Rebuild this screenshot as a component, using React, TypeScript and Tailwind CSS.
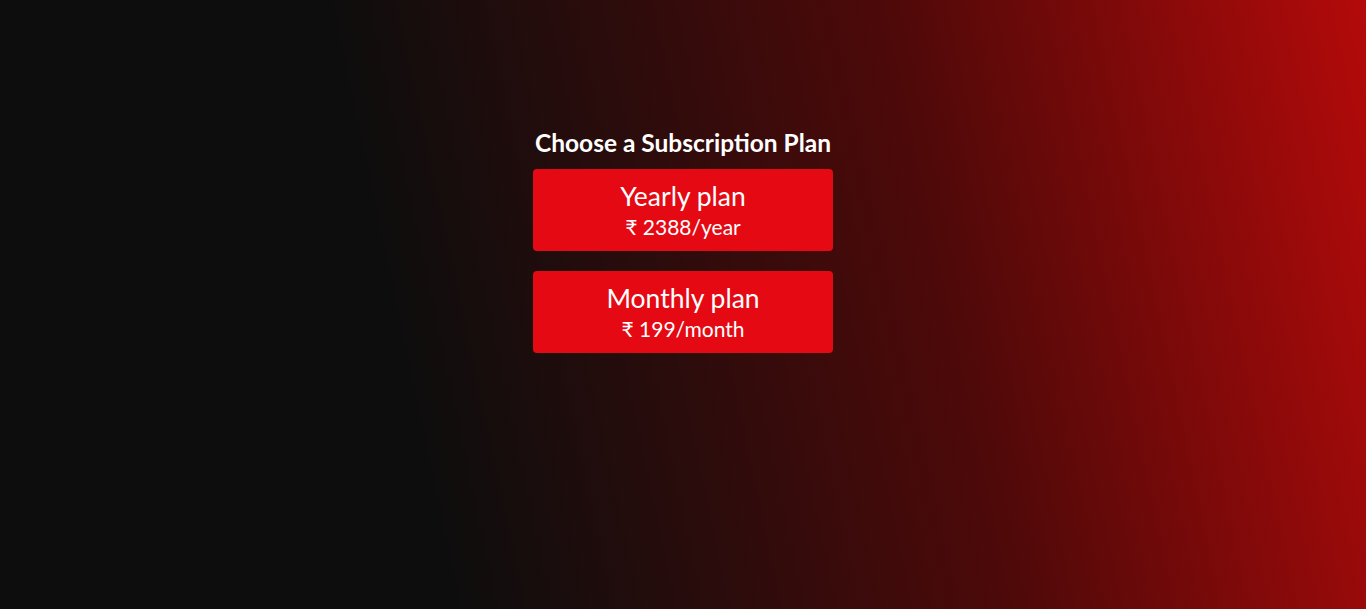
const plans = [
  { name: 'Yearly plan', price: '₹ 2388/year' },
  { name: 'Monthly plan', price: '₹ 199/month' },
];

export default function App() {
  return (
    <div className="flex h-[609px] w-full flex-col items-center bg-[linear-gradient(78deg,#0d0d0d_30%,#2a0c0c_48%,#4e0909_68%,#b40a0a_100%)] pt-[126px] font-['Lato','Noto_Sans',sans-serif] text-white">
      <h2 className="text-[24.5px] font-bold leading-[34px]">Choose a Subscription Plan</h2>
      <div className="mt-[9px] flex flex-col gap-[20px]">
        {plans.map((plan) => (
          <button
            key={plan.name}
            className="flex h-[82px] w-[300px] flex-col items-center justify-center rounded-[4px] bg-[#e50914] text-white"
          >
            <span className="text-[26.5px] leading-[31px]">{plan.name}</span>
            <span className="mt-[2px] text-[21px] leading-[26px]">{plan.price}</span>
          </button>
        ))}
      </div>
    </div>
  );
}
